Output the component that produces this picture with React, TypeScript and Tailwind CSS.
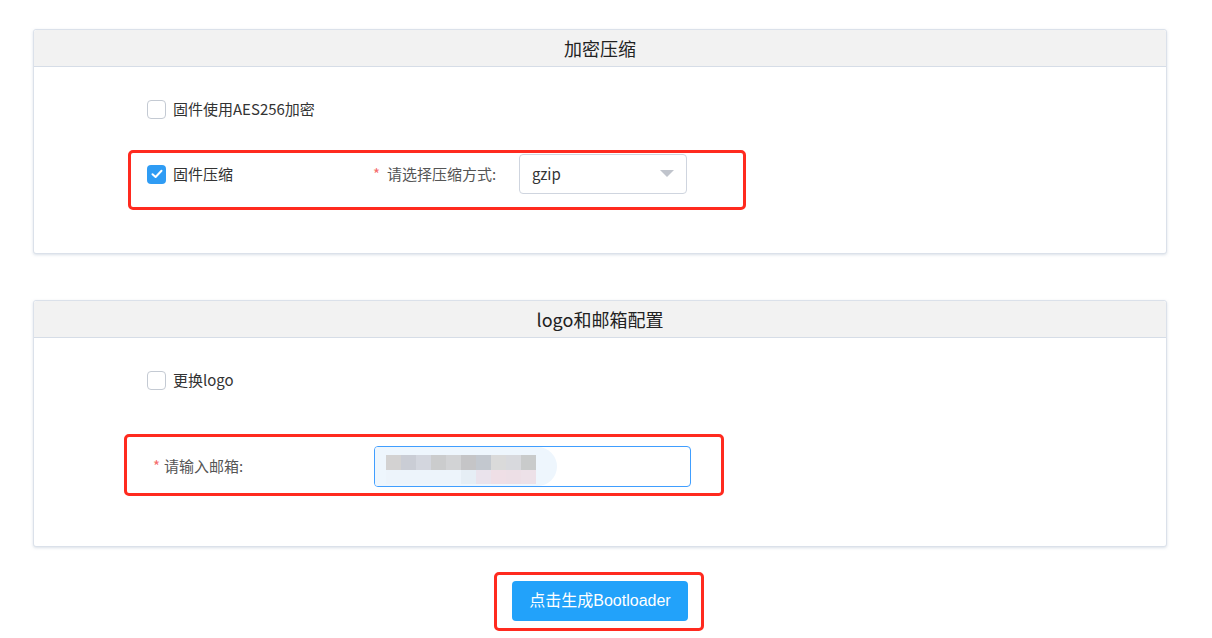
import React from "react";

const font = { fontFamily: '"Microsoft YaHei","Noto Sans CJK SC","Noto Sans",sans-serif' };

function Checkbox({ checked, label }: { checked?: boolean; label: string }) {
  return (
    <div className="flex items-center gap-[7px]">
      {checked ? (
        <span className="w-[19px] h-[19px] rounded-[4px] bg-[#2f9cf4] flex items-center justify-center">
          <svg width="12" height="10" viewBox="0 0 12 10" fill="none">
            <path d="M1.5 5.2 L4.6 8 L10.5 1.8" stroke="white" strokeWidth="2" strokeLinecap="round" strokeLinejoin="round" />
          </svg>
        </span>
      ) : (
        <span className="w-[19px] h-[19px] rounded-[4px] border border-[#c4cad3] bg-white" />
      )}
      <span className="text-[15px] text-[#333]">{label}</span>
    </div>
  );
}

function Card({ title, children }: { title: string; children: React.ReactNode }) {
  return (
    <div className="border border-[#dbe1ea] rounded-[3px] bg-white shadow-[0_1px_3px_rgba(150,165,190,0.35)]">
      <div className="h-[37px] bg-[#f2f2f2] border-b border-[#d6dde7] flex items-center justify-center text-[18px] text-[#222] rounded-t-[3px]">
        {title}
      </div>
      {children}
    </div>
  );
}

function RedBox({ className }: { className: string }) {
  return <div className={"absolute border-[3px] border-[#ff2a1f] rounded-[5px] pointer-events-none " + className} />;
}

const blurTop = ["#d3d2d2", "#cacdd5", "#d3d6de", "#cbcccd", "#d2d3d5", "#c5c5c7", "#c3c8cf", "#dadada", "#d8d9dd", "#c9cbcb"];
const blurBottom = ["#edf4fb", "#edf4fb", "#edf4fb", "#edf4fb", "#edf4fb", "#e6eef5", "#eae3ec", "#efdfe6", "#eddfe6", "#ede1e8"];

export default function App() {
  return (
    <div className="w-[1212px] h-[638px] bg-white overflow-hidden" style={font}>
      <div className="pt-[29px] pl-[33px] w-[1167px] flex flex-col">
        <Card title="加密压缩">
          <div className="relative pt-[22px] pb-[59px] pl-[113px] flex flex-col gap-[25px]">
            <div className="h-[40px] flex items-center">
              <Checkbox label="固件使用AES256加密" />
            </div>
            <div className="h-[40px] flex items-center">
              <div className="w-[226px]">
                <Checkbox checked label="固件压缩" />
              </div>
              <div className="w-[146px] flex items-center text-[15px] text-[#555]">
                <span className="text-[#f56c6c] mr-[7px]">*</span>
                <span>请选择压缩方式:</span>
              </div>
              <div className="w-[168px] h-[40px] border border-[#cfd5df] rounded-[4px] flex items-center justify-between pl-[12px] pr-[12px]">
                <span className="text-[15px] text-[#333]">gzip</span>
                <svg width="14" height="8" viewBox="0 0 14 8">
                  <path d="M0 0 L14 0 L7 7 Z" fill="#c0c4cc" />
                </svg>
              </div>
            </div>
            <RedBox className="left-[94px] top-[83px] w-[618px] h-[60px]" />
          </div>
        </Card>

        <div className="h-[46px]" />

        <Card title="logo和邮箱配置">
          <div className="relative pt-[22px] pb-[59px] pl-[113px] flex flex-col gap-[46px]">
            <div className="h-[40px] flex items-center">
              <Checkbox label="更换logo" />
            </div>
            <div className="h-[41px] flex items-center pl-[6px]">
              <div className="w-[221px] flex items-center text-[15px] text-[#555]">
                <span className="text-[#f56c6c] mr-[4px]">*</span>
                <span>请输入邮箱:</span>
              </div>
              <div className="relative w-[317px] h-[41px] border border-[#409eff] rounded-[4px] overflow-hidden">
                <div className="absolute left-0 top-0 w-[182px] h-[39px] bg-[#eef6fd] rounded-r-[20px]" />
                <div className="absolute left-[11px] top-[8px] flex flex-col">
                  <div className="flex">
                    {blurTop.map((c, i) => (
                      <div key={i} className="w-[15px] h-[15px]" style={{ background: c }} />
                    ))}
                  </div>
                  <div className="flex">
                    {blurBottom.map((c, i) => (
                      <div key={i} className="w-[15px] h-[14px]" style={{ background: c }} />
                    ))}
                  </div>
                </div>
              </div>
            </div>
            <RedBox className="left-[90px] top-[96px] w-[600px] h-[62px]" />
          </div>
        </Card>

        <div className="relative flex justify-center pt-[34px]">
          <button className="w-[176px] h-[40px] rounded-[4px] bg-[#22a2fa] text-white text-[16px]" style={{ fontFamily: 'Arial,"Liberation Sans","Noto Sans CJK SC",sans-serif' }}>
            点击生成Bootloader
          </button>
          <RedBox className="left-[461px] top-[25px] w-[210px] h-[59px]" />
        </div>
      </div>
    </div>
  );
}
